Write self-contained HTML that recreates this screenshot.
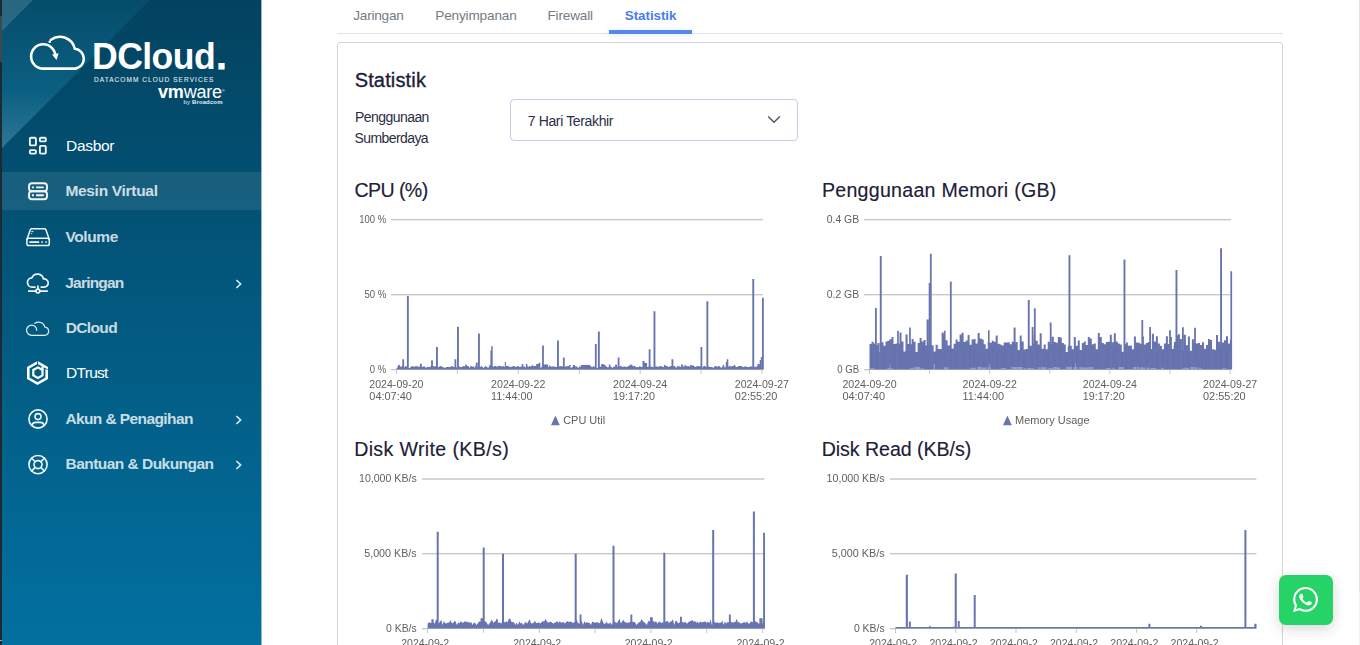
<!DOCTYPE html>
<html lang="id">
<head>
<meta charset="utf-8">
<title>DCloud - Mesin Virtual - Statistik</title>
<style>
*{box-sizing:border-box}
html,body{margin:0;padding:0}
body{width:1360px;height:645px;overflow:hidden;background:#fff;font-family:"Liberation Sans",sans-serif;position:relative;color:#222}
.edge{position:absolute;left:0;top:0;width:2px;height:645px;background:linear-gradient(180deg,#1d2a31 0,#1d2a31 16px,#3e484d 16px,#3e484d 62px,#1d2a32 62px,#1d2a32 640px,#9aa0a4 640px,#9aa0a4 641px,#1d2a32 641px)}
.side{position:absolute;left:2px;top:0;width:259px;height:645px;overflow:hidden;box-shadow:1px 0 0 rgba(3,84,122,.42);
 background:linear-gradient(180deg,#034360 0%,#0270a0 100%)}
.tri1{position:absolute;left:0;top:0;width:31px;height:31px;clip-path:polygon(0 0,100% 0,0 100%);background:rgba(255,255,255,.14)}
.tri2{position:absolute;left:0;top:0;width:148px;height:148px;clip-path:polygon(0 0,100% 0,0 100%);background:linear-gradient(180deg,rgba(48,204,251,.07) 0,rgba(48,204,251,.17) 62%,rgba(150,215,240,.3) 100%)}
.logo{position:absolute;left:0;top:0;width:259px;height:120px;color:#fff}
.logo svg{position:absolute;left:0;top:0}
.brand{position:absolute;left:90.4px;top:31.6px;font-size:37px;font-weight:700;line-height:50px;letter-spacing:-.6px;white-space:nowrap;transform:scaleX(.962);transform-origin:0 0}
.brand i{font-style:normal;-webkit-text-stroke:1px #fff;margin-left:1.6px}
.tag{position:absolute;left:92px;top:74.6px;font-size:6.5px;line-height:10px;font-weight:400;letter-spacing:1.06px;white-space:nowrap;opacity:.88;-webkit-text-stroke:.1px #fff}
.vm{position:absolute;left:156px;top:80.5px;font-size:18px;line-height:22px;white-space:nowrap;letter-spacing:-.2px}
.vm sup{font-size:4px;position:relative;top:-6px;vertical-align:baseline}
.by{position:absolute;left:181.6px;top:98.4px;font-size:6px;line-height:8px;white-space:nowrap;opacity:.9;letter-spacing:.12px}
.menu{list-style:none;margin:0;padding:0}
.nav{position:absolute;left:0;width:259px;height:46px;color:rgba(255,255,255,.8);font-weight:700;font-size:15.5px}
.nav.reg{font-weight:400;color:#fff}
.nav.active{height:38px;background:rgba(255,255,255,.085)}
.nav svg.ic{position:absolute;left:22px;top:9px}
.nav.active svg.ic{top:5px}
.nav .lbl{position:absolute;left:64px;top:14px;line-height:18px;white-space:nowrap}
.nav.active .lbl{top:10px}
.nav .chev{position:absolute;left:233.2px;top:18.2px;opacity:.85}
.main{position:absolute;left:261px;top:0;width:1099px;height:645px}
.tabs{position:absolute;left:76px;top:0;width:946px;height:34px;border-bottom:1px solid #dfe3e8}
.tab{position:absolute;top:7.2px;font-size:13.6px;line-height:17px;color:#747b83;white-space:nowrap;margin-left:-337px}
.tab.on{color:#4a7deb;font-weight:700;font-size:13.4px}
.ink{position:absolute;left:272px;top:30px;width:83px;height:4px;background:#5689ea;box-shadow:0 1px 6px rgba(80,130,235,.2)}
.card{position:absolute;left:76px;top:42px;width:946px;height:640px;border:1px solid #d6d6d6;border-radius:3px}
.card>*{position:absolute}
.h{margin:0;left:17px;top:25px;font-size:20px;line-height:24px;font-weight:400;color:#1c2038;white-space:nowrap;-webkit-text-stroke:.35px #1c2038}
.fl{left:17px;top:64px;font-size:14px;line-height:21px;color:#2a2e43;white-space:nowrap}
.sel{left:172px;top:56px;width:288px;height:42px;border:1px solid #d0c7e1;border-radius:4px;font-size:14px;color:#2a2e43}
.sel span{position:absolute;left:17px;top:12px;line-height:18px;white-space:nowrap}
.sel .caret{position:absolute;left:256px;top:15.4px}
.ct{margin:0;font-size:19.6px;-webkit-text-stroke:.15px #1c2038;line-height:24px;font-weight:400;color:#1c2038;white-space:nowrap;margin-left:-338px;margin-top:-43px;}
.chart{left:-338px;top:-43px;will-change:transform}
.chart text{font-family:"Liberation Sans",sans-serif;font-size:11px;fill:#5f5f5f}
.wa{position:absolute;left:1279px;top:575px;width:54px;height:50px;border-radius:7px;background:#25d366;box-shadow:0 4px 14px rgba(0,0,0,.16)}
.wa svg{position:absolute;left:14px;top:12px}
.sb{position:absolute;left:1359px;top:0;width:1px;height:645px;background:linear-gradient(180deg,#e2e2e2 0,#e2e2e2 592px,#f2f2f2 592px)}


#n-dash{letter-spacing:-0.303px;margin-left:0.01px}
#n-server{letter-spacing:-0.301px;margin-left:-0.63px}
#n-disk{letter-spacing:-0.418px;margin-left:-0.48px}
#n-net{letter-spacing:-0.788px;margin-left:-0.75px}
#n-cloud{letter-spacing:-0.603px;margin-left:-0.39px}
#n-trust{letter-spacing:-0.728px;margin-left:0.12px}
#n-user{letter-spacing:-0.596px;margin-left:-0.63px}
#n-help{letter-spacing:-0.536px;margin-left:-0.46px}
#t1{letter-spacing:-0.225px;margin-left:-337.79px}
#t2{letter-spacing:-0.165px;margin-left:-337.73px}
#t3{letter-spacing:-0.166px;margin-left:-337.54px}
#t4{letter-spacing:-0.054px;margin-left:-337.19px}
#h-stat{letter-spacing:0.148px;margin-left:-0.33px}
#l1{letter-spacing:-0.557px;margin-left:0.01px}
#l2{letter-spacing:-0.59px;margin-left:-0.46px}
#selv{letter-spacing:-0.355px;margin-left:-0.31px}
#c1{letter-spacing:-0.585px;margin-left:-338.57px}
#c2{letter-spacing:0.273px;margin-left:-339.1px}
#c3{letter-spacing:0.36px;margin-left:-338.88px}
#c4{letter-spacing:-0.05px;margin-left:-339.32px}
</style>
</head>
<body>
<div class="edge"></div>
<aside class="side">
  <div class="tri2"></div>
  <div class="tri1"></div>
  <div class="logo">
    <svg width="259" height="120" viewBox="2 0 259 120"><g fill="none" stroke="#fff" stroke-linecap="round" stroke-linejoin="round" stroke-width="2.6"><path d="M50.9 39.8 A15.2 15.2 0 0 1 74.8 48.8 A10 10 0 0 1 75.6 68.6 L43.3 68.6 A12.15 12.15 0 1 1 55.4 56.4"/></g><path d="M52.1 54.4 L58.6 53.2 L56.6 60 Z" fill="#fff"/><circle cx="49.7" cy="41.8" r="1.3" fill="#fff"/></svg>
    <div class="brand">DCloud<i>.</i></div>
    <div class="tag">DATACOMM CLOUD SERVICES</div>
    <div class="vm"><b>vm</b>ware<sup>®</sup></div>
    <div class="by">by <b>Broadcom</b></div>
  </div>
  <ul class="menu">
    <li class="nav reg" style="top:123px"><svg class="ic" width="30" height="28" viewBox="0 0 30 28"><g fill="none" stroke="#fff" stroke-linecap="round" stroke-linejoin="round" stroke-width="1.9" opacity="0.95"><rect x="5.9" y="5.7" width="6" height="7.7" rx="1"/><rect x="15.9" y="5.7" width="5.9" height="3.7" rx="1"/><rect x="5.9" y="18.1" width="6" height="3.5" rx="1"/><rect x="15.9" y="13.9" width="5.9" height="7.7" rx="1"/></g></svg><span class="lbl" id="n-dash">Dasbor</span></li>
    <li class="nav active" style="top:172px"><svg class="ic" width="30" height="28" viewBox="0 0 30 28"><g fill="none" stroke="#fff" stroke-linecap="round" stroke-linejoin="round" stroke-width="1.9" opacity="0.95"><rect x="5" y="6.2" width="18" height="8.05" rx="3"/><rect x="5" y="14.25" width="18" height="8.05" rx="3"/><path d="M7.9 10.4h2M12.1 10.4h7.7M7.9 18.3h2M12.1 18.3h7.7" stroke-linecap="butt" stroke-width="1.9"/></g></svg><span class="lbl" id="n-server">Mesin Virtual</span></li>
    <li class="nav " style="top:214px"><svg class="ic" width="30" height="28" viewBox="0 0 30 28"><g fill="none" stroke="#fff" stroke-linecap="round" stroke-linejoin="round" stroke-width="1.5" opacity="0.95"><path d="M2.9 16.4 L6.3 6.7 Q6.7 5.7 7.9 5.7 L20.3 5.7 Q21.5 5.7 21.9 6.7 L25.3 16.4"/><rect x="2.9" y="15.3" width="22.4" height="7.3" rx="1.8"/><path d="M5.4 19.2h9.8M17.4 19.2h1.4M21.4 19.2h1.4" stroke-linecap="butt" stroke-width="1.7"/><path d="M7.4 8.6h2M7.2 10.6h1" stroke-width="1" stroke-linecap="butt"/></g></svg><span class="lbl" id="n-disk">Volume</span></li>
    <li class="nav " style="top:260px"><svg class="ic" width="30" height="28" viewBox="0 0 30 28"><g fill="none" stroke="#fff" stroke-linecap="round" stroke-linejoin="round" stroke-width="1.7" opacity="0.95"><path d="M11 18.1 H8.4 A4.65 4.65 0 0 1 7.9 8.8 A6.1 6.1 0 0 1 19.5 10 A4.08 4.08 0 1 1 19.9 18.1 H17.2"/><path d="M13.9 17.2 V20"/><circle cx="13.9" cy="22.1" r="1.9"/><path d="M4 22.1 H12 M15.8 22.1 H23.9" stroke-linecap="butt"/></g></svg><span class="lbl" id="n-net">Jaringan</span><svg class="chev" width="8" height="12" viewBox="0 0 8 12"><path d="M1.4 2 L5.6 6 L1.4 10" fill="none" stroke="#fff" stroke-width="1.7"/></svg></li>
    <li class="nav " style="top:305px"><svg class="ic" width="30" height="28" viewBox="0 0 30 28"><g fill="none" stroke="#fff" stroke-linecap="round" stroke-linejoin="round" stroke-width="1.2" opacity="0.9"><g transform="translate(2 7.9) scale(.4188 .4137) translate(-29.8 -36.3)"><path d="M50.9 39.8 A15.2 15.2 0 0 1 74.8 48.8 A10 10 0 0 1 75.6 68.6 L43.3 68.6 A12.15 12.15 0 1 1 55.4 56.4" stroke-width="3" /></g></g></svg><span class="lbl" id="n-cloud">DCloud</span></li>
    <li class="nav reg" style="top:350px"><svg class="ic" width="30" height="28" viewBox="0 0 30 28"><g fill="none" stroke="#fff" stroke-linecap="round" stroke-linejoin="round" stroke-width="2.2" opacity="1"><path d="M13.5 3.4 L22.7 8.7 L22.7 19.3 L13.5 24.6 L4.3 19.3 L4.3 8.7 Z" stroke-width="2.6" stroke-linejoin="miter"/><path d="M13.9 8.4 L18.5 11 L18.5 16.4 L13.9 19 L9.3 16.4 L9.3 11 Z" stroke-width="2.2" stroke-linejoin="miter"/><path d="M18.5 11.4 V7.6" stroke-width="2.2" stroke-linecap="butt"/><path d="M13.5 1.6 V5.6 M20.6 9.2 L23.6 10.6" stroke="#04587f" stroke-width=".9" stroke-linecap="butt"/></g></svg><span class="lbl" id="n-trust">DTrust</span></li>
    <li class="nav " style="top:396px"><svg class="ic" width="30" height="28" viewBox="0 0 30 28"><g fill="none" stroke="#fff" stroke-linecap="round" stroke-linejoin="round" stroke-width="1.6" opacity="0.95"><circle cx="14" cy="14" r="9.1"/><circle cx="14" cy="11.6" r="3"/><path d="M8.2 19.9 Q8.8 17.4 11.6 17.4 L16.4 17.4 Q19.2 17.4 19.8 19.9"/></g></svg><span class="lbl" id="n-user">Akun &amp; Penagihan</span><svg class="chev" width="8" height="12" viewBox="0 0 8 12"><path d="M1.4 2 L5.6 6 L1.4 10" fill="none" stroke="#fff" stroke-width="1.7"/></svg></li>
    <li class="nav " style="top:441px"><svg class="ic" width="30" height="28" viewBox="0 0 30 28"><g fill="none" stroke="#fff" stroke-linecap="round" stroke-linejoin="round" stroke-width="1.6" opacity="0.95"><g transform="translate(0 .6)"><circle cx="14" cy="14" r="9.1"/><circle cx="14" cy="14" r="4"/><path d="M7.6 7.6 L11.2 11.2 M20.4 7.6 L16.8 11.2 M7.6 20.4 L11.2 16.8 M20.4 20.4 L16.8 16.8"/></g></g></svg><span class="lbl" id="n-help">Bantuan &amp; Dukungan</span><svg class="chev" width="8" height="12" viewBox="0 0 8 12"><path d="M1.4 2 L5.6 6 L1.4 10" fill="none" stroke="#fff" stroke-width="1.7"/></svg></li>
  </ul>
</aside>
<main class="main">
  <nav class="tabs">
    <a class="tab" id="t1" style="left:354px">Jaringan</a>
    <a class="tab" id="t2" style="left:436px">Penyimpanan</a>
    <a class="tab" id="t3" style="left:548px">Firewall</a>
    <a class="tab on" id="t4" style="left:625px">Statistik</a>
    <span class="ink"></span>
  </nav>
  <section class="card">
    <h2 class="h" id="h-stat">Statistik</h2>
    <label class="fl"><span id="l1">Penggunaan</span><br><span id="l2">Sumberdaya</span></label>
    <div class="sel"><span id="selv">7 Hari Terakhir</span>
      <svg class="caret" width="14" height="9" viewBox="0 0 14 9"><path d="M1.2 1.4 L7 7.2 L12.8 1.4" fill="none" stroke="#555" stroke-width="1.4"/></svg>
    </div>
    <h3 class="ct" id="c1" style="left:355px;top:178px">CPU (%)</h3>
    <h3 class="ct" id="c2" style="left:823px;top:178px">Penggunaan Memori (GB)</h3>
    <h3 class="ct" id="c3" style="left:355px;top:437px">Disk Write (KB/s)</h3>
    <h3 class="ct" id="c4" style="left:823px;top:437px">Disk Read (KB/s)</h3>
    <svg class="chart" width="1360" height="645" viewBox="0 0 1360 645"><path d="M391 220H763v1H391ZM391 295H763v1H391ZM391 370h5v1h-5Z" fill="#ececec"/><path d="M391 219H763v1H391ZM391 294H763v1H391ZM391 369H763v1H391ZM396 370h1v4h-1ZM456.9 370h1v4h-1ZM517.8 370h1v4h-1ZM578.8 370h1v4h-1ZM639.7 370h1v4h-1ZM700.6 370h1v4h-1ZM761.5 370h1v4h-1Z" fill="#c7c7c7"/><path d="M396.5 369.4V367.9L397.1 367.9L398.4 364.7L399.6 365.1L400.9 367.2L402.1 365.7L403.4 367.9L404.6 367L405.9 365.9L407.1 366.7L408.4 367.2L409.6 367.9L410.9 367.1L412.1 366.1L413.4 366.4L414.6 366.7L415.9 366.1L417.1 366.3L418.4 366.8L419.6 366.6L420.9 366.1L422.1 366.9L423.4 366.5L424.6 366.2L425.9 367.9L427.1 366.7L428.4 367.1L429.6 367.2L430.9 366.2L432.1 366L433.4 366.3L434.7 366.4L435.9 366L437.2 366.6L438.4 367.2L439.7 366.3L440.9 366.1L442.2 366.7L443.4 367.3L444.7 367.9L445.9 367.2L447.2 367.1L448.4 366.7L449.7 367.2L450.9 366.5L452.2 366.1L453.4 366.9L454.7 366.8L455.9 367.9L457.2 367L458.4 366.9L459.7 366.4L460.9 367.3L462.2 366.7L463.4 365.9L464.7 366.5L465.9 364L467.2 366.1L468.4 366.1L469.7 367.9L470.9 365.4L472.2 367L473.4 366L474.7 367.9L475.9 364.6L477.2 367.9L478.4 366.9L479.7 367.9L480.9 366L482.2 366.6L483.4 367.9L484.7 366.8L485.9 366.1L487.2 367.3L488.4 367.9L489.7 364.8L490.9 365.8L492.2 366.3L493.4 366.7L494.7 366.1L495.9 366.1L497.2 367L498.4 365.8L499.7 366.1L500.9 366.2L502.2 366.5L503.4 366L504.7 366.9L505.9 365.9L507.2 365.9L508.5 365.9L509.7 367L511 367L512.2 366.4L513.5 366L514.7 366.3L516 367.2L517.2 365.9L518.5 366.2L519.7 367L521 366.8L522.2 365.8L523.5 366.7L524.7 366.2L526 367.9L527.2 365.9L528.5 367.1L529.7 365.8L531 366.8L532.2 364.8L533.5 366.3L534.7 365.9L536 366L537.2 367L538.5 366.9L539.7 366.4L541 367.9L542.2 365.9L543.5 366.6L544.7 365.9L546 365.9L547.2 366.5L548.5 367.3L549.7 364.9L551 367L552.2 366.2L553.5 366.8L554.7 366.5L556 367.1L557.2 366.9L558.5 366.1L559.7 366.5L561 365.9L562.2 366.4L563.5 366.5L564.7 366.6L566 366.6L567.2 366.3L568.5 365.9L569.7 366.5L571 367.9L572.2 367.1L573.5 367.2L574.7 367.2L576 366.1L577.2 367.1L578.5 367.9L579.8 366L581 367L582.3 366.7L583.5 365.8L584.8 367.1L586 366.5L587.3 367L588.5 364.5L589.8 365.3L591 366.4L592.3 367.2L593.5 366.1L594.8 367.1L596 367.2L597.3 367.9L598.5 366.7L599.8 366.1L601 367.1L602.3 366.4L603.5 365.3L604.8 364.4L606 366.3L607.3 367.2L608.5 367.2L609.8 366.6L611 366.5L612.3 367.9L613.5 366.5L614.8 367.1L616 367.2L617.3 366.8L618.5 366.2L619.8 366.5L621 365.6L622.3 367.3L623.5 366.5L624.8 366.6L626 367.1L627.3 366.7L628.5 366L629.8 366.5L631 365.8L632.3 366.1L633.5 366.3L634.8 365.8L636 367.2L637.3 366.9L638.5 367.2L639.8 366L641 366.9L642.3 366.9L643.5 367.1L644.8 366.9L646 365.8L647.3 366.9L648.5 366.8L649.8 367.3L651 366.6L652.3 367L653.6 367.3L654.8 367.2L656.1 366L657.3 367L658.6 366.5L659.8 366.3L661.1 366L662.3 366.8L663.6 367.1L664.8 364.2L666.1 366L667.3 366.2L668.6 367.1L669.8 366.5L671.1 366.1L672.3 366.4L673.6 366.3L674.8 365.9L676.1 367.9L677.3 366L678.6 366.4L679.8 366.3L681.1 367.3L682.3 366.2L683.6 366.5L684.8 367.2L686.1 365.7L687.3 366.2L688.6 366.2L689.8 366.6L691.1 366.6L692.3 366.1L693.6 365.3L694.8 366.9L696.1 366.8L697.3 366.1L698.6 366.3L699.8 366.3L701.1 366.5L702.3 367.9L703.6 366L704.8 365.8L706.1 367.3L707.3 366.1L708.6 366.6L709.8 367L711.1 367L712.3 367.1L713.6 367.9L714.8 366.1L716.1 366L717.3 367L718.6 365.8L719.8 366.6L721.1 367.9L722.3 366.8L723.6 364L724.8 367.9L726.1 365.9L727.4 365.9L728.6 366.7L729.9 365.8L731.1 366.8L732.4 365.9L733.6 366L734.9 365.9L736.1 366.9L737.4 367L738.6 365.9L739.9 366.1L741.1 365.9L742.4 366.5L743.6 367.2L744.9 366.6L746.1 366.3L747.4 367.2L748.6 367.1L749.9 366.8L751.1 366.2L752.4 366.9L753.6 366.8L754.9 366.7L756.1 367.1L757.4 365.9L758.6 367L759.9 365.8L761.1 367.1L762.4 367.2L763 367.2V369.4ZM406.9 369.4V296.1h1.9V369.4ZM402.3 369.4V359.3h1.8V369.4ZM420 369.4V363.7h1.8V369.4ZM431.1 369.4V360.3h1.8V369.4ZM436 369.4V347.1h1.9V369.4ZM454.5 369.4V359.3h1.8V369.4ZM457 369.4V326.7h1.9V369.4ZM475.9 369.4V362.5h1.8V369.4ZM478 369.4V333.6h1.9V369.4ZM490.4 369.4V350.5h1.1V369.4ZM491.2 369.4V346.3h1.5V369.4ZM504.8 369.4V362.1h1.1V369.4ZM521.8 369.4V364.1h1.5V369.4ZM525.9 369.4V364.1h1.5V369.4ZM536.2 369.4V364.1h2.6V369.4ZM538.7 369.4V362.7h1.6V369.4ZM542.1 369.4V345.4h1.8V369.4ZM543.9 369.4V364.5h4.2V369.4ZM557 369.4V340.4h1.9V369.4ZM562.9 369.4V357.6h1.8V369.4ZM569 369.4V364.9h1.5V369.4ZM572.9 369.4V365.1h2.1V369.4ZM580.9 369.4V364.9h8.2V369.4ZM594.9 369.4V344.1h1.8V369.4ZM597.9 369.4V331.4h1.9V369.4ZM601.2 369.4V364.1h2.5V369.4ZM608.8 369.4V364.5h1.5V369.4ZM614.9 369.4V364.7h2.1V369.4ZM617.7 369.4V357.6h1.8V369.4ZM629.4 369.4V364.7h3.1V369.4ZM642.5 369.4V361.1h2.1V369.4ZM644 369.4V363.1h3.1V369.4ZM648.7 369.4V349.3h1.8V369.4ZM653.5 369.4V311.3h1.9V369.4ZM671.5 369.4V359.3h1.8V369.4ZM681.1 369.4V364.5h1.8V369.4ZM684.3 369.4V364.9h1.3V369.4ZM690.3 369.4V364.9h2.1V369.4ZM700.5 369.4V347.1h1.8V369.4ZM706.4 369.4V301.3h1.9V369.4ZM725.8 369.4V362.1h1.1V369.4ZM726.7 369.4V359.3h1.6V369.4ZM733.8 369.4V364.9h1.5V369.4ZM752.3 369.4V279.1h1.9V369.4ZM757.5 369.4V364.1h2.1V369.4ZM759.7 369.4V360.1h1.3V369.4ZM760.8 369.4V357.1h1.1V369.4ZM762 369.4V297.8h1.8V369.4Z" fill="#6874ae"/><text x="359.2" y="223" textLength="27" lengthAdjust="spacingAndGlyphs">100 %</text><text x="364.4" y="298" textLength="21.8" lengthAdjust="spacingAndGlyphs">50 %</text><text x="369.8" y="373" textLength="16.4" lengthAdjust="spacingAndGlyphs">0 %</text><text x="369.3" y="388" textLength="54.2" lengthAdjust="spacingAndGlyphs">2024-09-20</text><text x="369.3" y="400" textLength="42.6" lengthAdjust="spacingAndGlyphs">04:07:40</text><text x="491.1" y="388" textLength="54.2" lengthAdjust="spacingAndGlyphs">2024-09-22</text><text x="491.1" y="400" textLength="41.4" lengthAdjust="spacingAndGlyphs">11:44:00</text><text x="613" y="388" textLength="54.2" lengthAdjust="spacingAndGlyphs">2024-09-24</text><text x="613" y="400" textLength="42" lengthAdjust="spacingAndGlyphs">19:17:20</text><text x="734.8" y="388" textLength="54.2" lengthAdjust="spacingAndGlyphs">2024-09-27</text><text x="734.8" y="400" textLength="42.6" lengthAdjust="spacingAndGlyphs">02:55:20</text><path d="M551 425.20000000000005 L555.4 415.6 L559.8 425.20000000000005 Z" fill="#6874ae"/><text x="563.2" y="424.2" textLength="42" lengthAdjust="spacingAndGlyphs">CPU Util</text><path d="M864 220H1231v1H864ZM864 295H1231v1H864ZM864 370h5v1h-5Z" fill="#ececec"/><path d="M864 219H1231v1H864ZM864 294H1231v1H864ZM864 369H1231v1H864ZM869 370h1v4h-1ZM929.1 370h1v4h-1ZM989.2 370h1v4h-1ZM1049.3 370h1v4h-1ZM1109.4 370h1v4h-1ZM1169.5 370h1v4h-1ZM1229.6 370h1v4h-1Z" fill="#c7c7c7"/><path d="M869.5 369.4V343.9H871.5V341.7H873.5V343.6H875.5V345.1H877.5V343.1H879.5V352H881.5V342.3H883.5V345.7H885.5V341.6H887.5V340.8H889.5V339.3H891.5V337H893.5V343.9H895.5V343.6H897.5V343.7H899.5V332.4H901.5V341.4H903.5V351.5H905.5V334.4H907.6V344.1H909.6V344.2H911.6V339.1H913.6V341.8H915.6V352.1H917.6V343.1H919.6V338.1H921.6V341.6H923.6V340H925.6V345.6H927.6V345.1H929.6V334.7H931.6V345.3H933.6V351.5H935.6V344.7H937.6V348.9H939.6V349H941.6V332.5H943.6V334.3H945.6V340.3H947.6V345.5H949.6V344.8H951.6V348.6H953.6V343.7H955.6V339.6H957.6V341.8H959.6V334.6H961.6V332.8H963.6V341.9H965.6V340.6H967.6V334.9H969.6V344.7H971.6V339.4H973.6V339H975.6V343.4H977.6V333.1H979.7V338.6H981.7V339.4H983.7V344.2H985.7V348.8H987.7V341.5H989.7V342.8H991.7V340.7H993.7V341.8H995.7V335.5H997.7V343.7H999.7V344.5H1001.7V345.6H1003.7V342.6H1005.7V342.6H1007.7V342.3H1009.7V344.3H1011.7V341.8H1013.7V344H1015.7V342H1017.7V350.1H1019.7V335.5H1021.7V341.4H1023.7V349.5H1025.7V349H1027.7V345.5H1029.7V345.8H1031.7V335H1033.7V343.7H1035.7V340.8H1037.7V344.5H1039.7V333.2H1041.7V348.8H1043.7V344.4H1045.7V349.2H1047.7V341.8H1049.7V344.2H1051.8V336.7H1053.8V342.1H1055.8V342.7H1057.8V337.1H1059.8V337.4H1061.8V343.1H1063.8V344.5H1065.8V352.1H1067.8V345.8H1069.8V345.7H1071.8V349.2H1073.8V337H1075.8V345.8H1077.8V340.5H1079.8V349.9H1081.8V343H1083.8V341.6H1085.8V345H1087.8V336.9H1089.8V338.6H1091.8V344.3H1093.8V343.6H1095.8V349.2H1097.8V333H1099.8V337H1101.8V343.1H1103.8V344.2H1105.8V341.9H1107.8V341.7H1109.8V334.8H1111.8V342.2H1113.8V333.3H1115.8V341.5H1117.8V343.5H1119.8V344.5H1121.8V352.1H1123.9V343.9H1125.9V342.4H1127.9V345.8H1129.9V345.6H1131.9V349.2H1133.9V336.5H1135.9V342.6H1137.9V342.8H1139.9V343.7H1141.9V336.4H1143.9V344.6H1145.9V343H1147.9V342.1H1149.9V349H1151.9V333.7H1153.9V341.5H1155.9V336.3H1157.9V343.6H1159.9V345.8H1161.9V349.2H1163.9V343.4H1165.9V336.3H1167.9V344H1169.9V336.9H1171.9V349.1H1173.9V341.8H1175.9V335.6H1177.9V334.3H1179.9V339H1181.9V351H1183.9V334.7H1185.9V345.3H1187.9V336.4H1189.9V350.7H1191.9V339.2H1193.9V343.1H1196V343.5H1198V343.1H1200V344.9H1202V342.3H1204V348.7H1206V344.9H1208V338.9H1210V340.1H1212V349.2H1214V349.7H1216V335.1H1218V341.8H1220V345.4H1222V342.5H1224V340.3H1226V336.2H1228V343.6H1230V339.2H1232V369.4ZM875 369.4V308h1.8V369.4ZM879.8 369.4V255.9h1.9V369.4ZM897.1 369.4V330.8h1.7V369.4ZM909.1 369.4V327.6h1.7V369.4ZM926.6 369.4V319.6h2V369.4ZM928.7 369.4V283.1h1.6V369.4ZM929.9 369.4V253.8h1.8V369.4ZM943.9 369.4V330.8h1.7V369.4ZM949.9 369.4V281.6h1.8V369.4ZM988 369.4V330.3h1.6V369.4ZM1013.6 369.4V327.6h2V369.4ZM1027.8 369.4V300h1.9V369.4ZM1031.7 369.4V326.9h1.8V369.4ZM1033.9 369.4V308.3h1.8V369.4ZM1049.8 369.4V322.6h1.8V369.4ZM1068.5 369.4V255.3h1.9V369.4ZM1123.5 369.4V259.6h1.9V369.4ZM1141.4 369.4V320h1.8V369.4ZM1149.2 369.4V326.9h1.8V369.4ZM1169.1 369.4V330.3h1.8V369.4ZM1175.5 369.4V270h1.9V369.4ZM1182 369.4V327.2h1.8V369.4ZM1194.1 369.4V327.8h1.8V369.4ZM1220.1 369.4V248.3h1.9V369.4ZM1230.4 369.4V271.3h1.7V369.4Z" fill="#6874ae"/><path d="M871.5 349.2V369.4M877.2 347.4V369.4M883.9 348V369.4M890.5 355.1V369.4M894.9 346V369.4M900.1 346.4V369.4M902.7 350.7V369.4M905.9 350V369.4M910.8 355.3V369.4M913.9 352.6V369.4M920.4 347.7V369.4M923.2 347.4V369.4M925.9 349.2V369.4M928.6 355.4V369.4M934.9 353.3V369.4M938 345.6V369.4M944.4 352.5V369.4M951.2 350V369.4M956.6 353.4V369.4M963.3 348.5V369.4M970.1 346.5V369.4M973.6 351.8V369.4M976.4 353.9V369.4M978.7 352.4V369.4M983.8 355.4V369.4M989.2 352V369.4M992.7 347.2V369.4M997.1 352.2V369.4M1001.5 348.4V369.4M1003.8 345.6V369.4M1005.9 347.9V369.4M1012.1 355.2V369.4M1018.1 351.7V369.4M1023 355.3V369.4M1025.2 353.6V369.4M1032 353.4V369.4M1037.8 346.1V369.4M1044.5 352V369.4M1048.2 350.2V369.4M1054.1 354.3V369.4M1059.9 347.4V369.4M1066.2 355V369.4M1072.9 354.5V369.4M1076.6 349.3V369.4M1083.2 352V369.4M1089.8 349.9V369.4M1093.4 352.2V369.4M1096.2 354.6V369.4M1099 348.5V369.4M1106 353.8V369.4M1108.2 345.5V369.4M1112.9 351.3V369.4M1116.1 349.5V369.4M1122.2 350.8V369.4M1126.3 354.8V369.4M1132.9 355.1V369.4M1137.4 347V369.4M1140 348.1V369.4M1146.8 349.1V369.4M1152.7 354.3V369.4M1156.9 353.9V369.4M1163.1 352.5V369.4M1167.4 345.4V369.4M1173.6 345.6V369.4M1177.9 350.5V369.4M1183.5 350.6V369.4M1187 351.4V369.4M1189.7 351.6V369.4M1196.7 345.8V369.4M1201.8 350.4V369.4M1205.5 354.5V369.4M1208.9 347.6V369.4M1215.2 351.8V369.4M1221.1 347.7V369.4M1226.6 348.8V369.4" stroke="#5f6ba8" stroke-width=".7" fill="none" opacity=".5"/><path d="M870.5 369.4v-1.4h3.8V369.4ZM887.4 369.4v-1.5h5.1V369.4ZM889.5 369.4v-5h1V369.4ZM910.3 369.4v-1.6h3.6V369.4ZM914.6 369.4v-2.4h5.5V369.4ZM920.3 369.4v-1.2h3.4V369.4ZM933.3 369.4v-2h1.5V369.4ZM933.9 369.4v-5.5h1V369.4ZM943.8 369.4v-2.1h4.4V369.4ZM970.4 369.4v-1.7h5.4V369.4ZM977.2 369.4v-2.6h3.8V369.4ZM981 369.4v-1.8h5.5V369.4ZM987.6 369.4v-2.1h3.1V369.4ZM988.9 369.4v-5.6h1V369.4ZM1000.9 369.4v-1.5h5.2V369.4ZM1011.4 369.4v-2.4h4.8V369.4ZM1016.4 369.4v-2.5h6.4V369.4ZM1024.3 369.4v-1.5h1.6V369.4ZM1027.4 369.4v-1.4h6.3V369.4ZM1037.7 369.4v-2.2h1.8V369.4ZM1040.5 369.4v-2.2h5.9V369.4ZM1048.6 369.4v-1.3h4V369.4ZM1053 369.4v-2.3h4.6V369.4ZM1057.7 369.4v-2h2.4V369.4ZM1065.8 369.4v-2.6h6.2V369.4ZM1073.4 369.4v-2.5h4.1V369.4ZM1075 369.4v-6h1V369.4ZM1079.1 369.4v-2.2h4.2V369.4ZM1083.5 369.4v-1.9h5V369.4ZM1088.7 369.4v-2.4h4.5V369.4ZM1105.8 369.4v-1.3h4.9V369.4ZM1112.2 369.4v-1.7h2.4V369.4ZM1118.4 369.4v-2.5h5.4V369.4ZM1133 369.4v-2.3h3.2V369.4ZM1136.8 369.4v-2.5h2.1V369.4ZM1139.8 369.4v-1.9h5.2V369.4ZM1146.5 369.4v-1.9h2.7V369.4ZM1150.3 369.4v-1.3h6.2V369.4ZM1161 369.4v-1.6h2.6V369.4ZM1182.6 369.4v-1.6h6.3V369.4ZM1190.5 369.4v-2.4h4V369.4ZM1195 369.4v-2.1h2.9V369.4ZM1199 369.4v-1.7h2.4V369.4ZM1222 369.4v-1.2h4.2V369.4Z" fill="#9aa3cf" opacity=".85"/><text x="826.7" y="223" textLength="32.5" lengthAdjust="spacingAndGlyphs">0.4 GB</text><text x="826.7" y="298" textLength="32.5" lengthAdjust="spacingAndGlyphs">0.2 GB</text><text x="837.2" y="373" textLength="22" lengthAdjust="spacingAndGlyphs">0 GB</text><text x="842.4" y="388" textLength="54.2" lengthAdjust="spacingAndGlyphs">2024-09-20</text><text x="842.4" y="400" textLength="42.6" lengthAdjust="spacingAndGlyphs">04:07:40</text><text x="962.6" y="388" textLength="54.2" lengthAdjust="spacingAndGlyphs">2024-09-22</text><text x="962.6" y="400" textLength="41.4" lengthAdjust="spacingAndGlyphs">11:44:00</text><text x="1082.8" y="388" textLength="54.2" lengthAdjust="spacingAndGlyphs">2024-09-24</text><text x="1082.8" y="400" textLength="42" lengthAdjust="spacingAndGlyphs">19:17:20</text><text x="1203" y="388" textLength="54.2" lengthAdjust="spacingAndGlyphs">2024-09-27</text><text x="1203" y="400" textLength="42.6" lengthAdjust="spacingAndGlyphs">02:55:20</text><path d="M1003 425.20000000000005 L1007.4 415.6 L1011.8 425.20000000000005 Z" fill="#6874ae"/><text x="1015.1" y="424.2" textLength="74.4" lengthAdjust="spacingAndGlyphs">Memory Usage</text><path d="M422 554H764.4v1H422ZM422 629h5v1h-5Z" fill="#ececec"/><path d="M422 553H764.4v1H422ZM422 628H764.4v1H422ZM427.1 629h1v4h-1ZM482.9 629h1v4h-1ZM538.8 629h1v4h-1ZM594.6 629h1v4h-1ZM650.4 629h1v4h-1ZM706.2 629h1v4h-1ZM762.1 629h1v4h-1Z" fill="#c7c7c7"/><path d="M422 478H764.4v2H422Z" fill="#d5d5d5"/><path d="M427.6 628.4V623.3L428.3 623.3L429.6 621.9L430.9 623.2L432.2 621.4L433.5 622.3L434.8 623.8L436.1 619L437.4 623.1L438.7 623.7L440 621.6L441.3 620.1L442.6 625L443.9 620.9L445.2 623.3L446.5 623.4L447.8 622.4L449.1 622.8L450.4 620L451.7 623.1L453 623.2L454.3 621.1L455.6 621.5L456.9 625L458.2 622.4L459.5 623.2L460.8 621.1L462.1 622.7L463.4 622.6L464.7 621.4L466 621.6L467.3 622.3L468.6 622.1L469.9 623.1L471.2 622.1L472.5 625L473.8 622.8L475.1 622.8L476.4 625L477.7 623.6L479 621.5L480.3 621.7L481.6 621.1L482.9 622.6L484.2 620.9L485.5 621.2L486.8 622.7L488.1 625L489.4 623.6L490.7 621.5L492 619.6L493.3 622.9L494.6 621.4L495.9 621.1L497.2 621.6L498.5 623L499.8 622.2L501.1 623.7L502.4 621.3L503.7 621.2L505 622.5L506.3 621.3L507.6 622.2L508.9 618.7L510.2 618.4L511.5 621.9L512.8 622L514.1 622.6L515.4 625L516.7 622.4L518 625L519.3 621.2L520.6 623.4L521.9 622.8L523.2 625L524.5 623.2L525.8 621.7L527.1 623.7L528.4 621.2L529.7 619.2L531 623.6L532.3 623.3L533.6 623L534.9 620.8L536.2 622.9L537.5 622.9L538.8 622.2L540.2 623.5L541.5 622.3L542.8 620.9L544.1 621.7L545.4 619L546.7 620.9L548 622.8L549.3 622.3L550.6 621.4L551.9 622.5L553.2 623.7L554.5 622.5L555.8 622.6L557.1 621L558.4 623.1L559.7 621.3L561 622.4L562.3 622.6L563.6 621.9L564.9 623.5L566.2 622.3L567.5 621.1L568.8 621.9L570.1 621.8L571.4 621.7L572.7 623.1L574 622.6L575.3 621.3L576.6 619L577.9 622.9L579.2 623.4L580.5 623.6L581.8 621L583.1 625L584.4 620.9L585.7 623.2L587 621.9L588.3 623L589.6 622.8L590.9 625L592.2 621.8L593.5 622L594.8 622.7L596.1 622.4L597.4 621.9L598.7 623.3L600 623L601.3 617.8L602.6 621L603.9 623.7L605.2 623.7L606.5 621.7L607.8 623.8L609.1 623.5L610.4 622.4L611.7 625L613 621.4L614.3 620.7L615.6 622.6L616.9 623.1L618.2 621.3L619.5 618.6L620.8 623.6L622.1 621.6L623.4 620.1L624.7 622L626 622.4L627.3 622.8L628.6 622.7L629.9 621.9L631.2 621.3L632.5 621.8L633.8 621.9L635.1 622.3L636.4 625L637.7 623.5L639 622.2L640.3 621.7L641.6 619.1L642.9 621.2L644.2 622.2L645.5 623.3L646.8 625L648.1 621.2L649.4 621.1L650.7 623.1L652 621.1L653.4 621.1L654.7 622.6L656 621L657.3 623.8L658.6 622L659.9 621.5L661.2 623.3L662.5 622.2L663.8 623.2L665.1 622.1L666.4 621.6L667.7 620.7L669 623.3L670.3 621.4L671.6 621.3L672.9 619.3L674.2 625L675.5 621L676.8 621.1L678.1 623.4L679.4 622.5L680.7 621.5L682 621.8L683.3 622.5L684.6 622.3L685.9 622.2L687.2 623.7L688.5 622L689.8 621.6L691.1 620.8L692.4 619.9L693.7 622.1L695 620.8L696.3 623.1L697.6 621.4L698.9 623.6L700.2 621.3L701.5 622.4L702.8 621.9L704.1 621.7L705.4 621.5L706.7 623L708 621.4L709.3 623.2L710.6 619.3L711.9 625L713.2 621.3L714.5 621.8L715.8 623.1L717.1 622.3L718.4 623.1L719.7 622.8L721 622.7L722.3 620.6L723.6 625L724.9 621.2L726.2 623.7L727.5 622L728.8 622.3L730.1 622.7L731.4 621.9L732.7 622.8L734 621.9L735.3 622.3L736.6 618.8L737.9 622.4L739.2 622L740.5 623.5L741.8 623.3L743.1 622.8L744.4 621.7L745.7 623.3L747 621.3L748.3 623.5L749.6 623.5L750.9 621.5L752.2 621.7L753.5 623.5L754.8 620.5L756.1 622.1L757.4 622.2L758.7 623.8L760 622.8L761.3 622.7L762.6 623.7L763.9 621.1L764.6 621.1V628.4ZM436.7 628.4V531.7h2V628.4ZM482.7 628.4V547.6h2V628.4ZM502 628.4V553.8h2V628.4ZM574.7 628.4V553.8h2V628.4ZM612.5 628.4V545.7h2V628.4ZM663.3 628.4V552.7h2V628.4ZM712.2 628.4V530h2V628.4ZM752.9 628.4V511.6h2V628.4ZM763.1 628.4V532.8h1.9V628.4ZM579.6 628.4V614.6h1.9V628.4ZM630.4 628.4V614.6h1.9V628.4ZM728.9 628.4V614.6h1.9V628.4ZM680 628.4V616.8h1.9V628.4ZM431.4 628.4V619.3h2.2V628.4ZM480.5 628.4V618.3h2.2V628.4ZM496 628.4V619.3h1.9V628.4ZM650 628.4V617.3h2.8V628.4ZM759.4 628.4V618.3h3.2V628.4Z" fill="#6874ae"/><text x="359" y="482" textLength="57.7" lengthAdjust="spacingAndGlyphs">10,000 KB/s</text><text x="364.2" y="557" textLength="52.5" lengthAdjust="spacingAndGlyphs">5,000 KB/s</text><text x="386" y="632" textLength="30.7" lengthAdjust="spacingAndGlyphs">0 KB/s</text><text x="401.2" y="647" textLength="48" lengthAdjust="spacingAndGlyphs">2024-09-2</text><text x="513.2" y="647" textLength="48" lengthAdjust="spacingAndGlyphs">2024-09-2</text><text x="624.7" y="647" textLength="48" lengthAdjust="spacingAndGlyphs">2024-09-2</text><text x="736.5" y="647" textLength="48" lengthAdjust="spacingAndGlyphs">2024-09-2</text><path d="M890 554H1256.4v1H890ZM890 629h5v1h-5Z" fill="#ececec"/><path d="M890 553H1256.4v1H890ZM890 628H1256.4v1H890ZM895 629h1v4h-1ZM955.2 629h1v4h-1ZM1015.5 629h1v4h-1ZM1075.8 629h1v4h-1ZM1136 629h1v4h-1ZM1196.2 629h1v4h-1Z" fill="#c7c7c7"/><path d="M890 478H1256.4v2H890Z" fill="#d5d5d5"/><path d="M895.5 628.4v-1.3H1256.4V628.4ZM905.8 628.4V574.7h2.1V628.4ZM908.9 628.4V621.6h1.9V628.4ZM929 628.4V626.3h2V628.4ZM952.7 628.4V626.7h2.6V628.4ZM954.7 628.4V573.6h2.1V628.4ZM957.8 628.4V621h1.9V628.4ZM973.7 628.4V595.1h2V628.4ZM1148.4 628.4V623.8h2V628.4ZM1200 628.4V625.8h2V628.4ZM1244.4 628.4V530h2V628.4ZM1254.3 628.4V623.8h2.2V628.4Z" fill="#6874ae"/><text x="826.6" y="482" textLength="58" lengthAdjust="spacingAndGlyphs">10,000 KB/s</text><text x="831.8" y="557" textLength="52.8" lengthAdjust="spacingAndGlyphs">5,000 KB/s</text><text x="853.9" y="632" textLength="30.7" lengthAdjust="spacingAndGlyphs">0 KB/s</text><text x="869.2" y="647" textLength="48" lengthAdjust="spacingAndGlyphs">2024-09-2</text><text x="929.5" y="647" textLength="48" lengthAdjust="spacingAndGlyphs">2024-09-2</text><text x="989.8" y="647" textLength="48" lengthAdjust="spacingAndGlyphs">2024-09-2</text><text x="1050" y="647" textLength="48" lengthAdjust="spacingAndGlyphs">2024-09-2</text><text x="1110.3" y="647" textLength="48" lengthAdjust="spacingAndGlyphs">2024-09-2</text><text x="1170.6" y="647" textLength="48" lengthAdjust="spacingAndGlyphs">2024-09-2</text></svg>
  </section>
</main>
<a class="wa" aria-label="WhatsApp"><svg width="25" height="25" viewBox="0 0 24 24"><path fill="#fff" d="M17.472 14.382c-.297-.149-1.758-.867-2.03-.967-.273-.099-.471-.148-.67.15-.197.297-.767.966-.94 1.164-.173.199-.347.223-.644.075-.297-.15-1.255-.463-2.39-1.475-.883-.788-1.48-1.761-1.653-2.059-.173-.297-.018-.458.13-.606.134-.133.298-.347.446-.52.149-.174.198-.298.298-.497.099-.198.05-.371-.025-.52-.075-.149-.669-1.612-.916-2.207-.242-.579-.487-.5-.669-.51-.173-.008-.371-.01-.57-.01-.198 0-.52.074-.792.372-.272.297-1.04 1.016-1.04 2.479 0 1.462 1.065 2.875 1.213 3.074.149.198 2.096 3.2 5.077 4.487.709.306 1.262.489 1.694.625.712.227 1.36.195 1.871.118.571-.085 1.758-.719 2.006-1.413.248-.694.248-1.289.173-1.413-.074-.124-.272-.198-.57-.347m-5.421 7.403h-.004a9.87 9.87 0 01-5.031-1.378l-.361-.214-3.741.982.998-3.648-.235-.374a9.86 9.86 0 01-1.51-5.26c.001-5.45 4.436-9.884 9.888-9.884 2.64 0 5.122 1.03 6.988 2.898a9.825 9.825 0 012.893 6.994c-.003 5.45-4.437 9.884-9.885 9.884m8.413-18.297A11.815 11.815 0 0012.05 0C5.495 0 .16 5.335.157 11.892c0 2.096.547 4.142 1.588 5.945L.057 24l6.305-1.654a11.882 11.882 0 005.683 1.448h.005c6.554 0 11.890-5.335 11.893-11.893a11.821 11.821 0 00-3.48-8.413Z"/></svg></a>
<div class="sb"></div>
</body>
</html>
